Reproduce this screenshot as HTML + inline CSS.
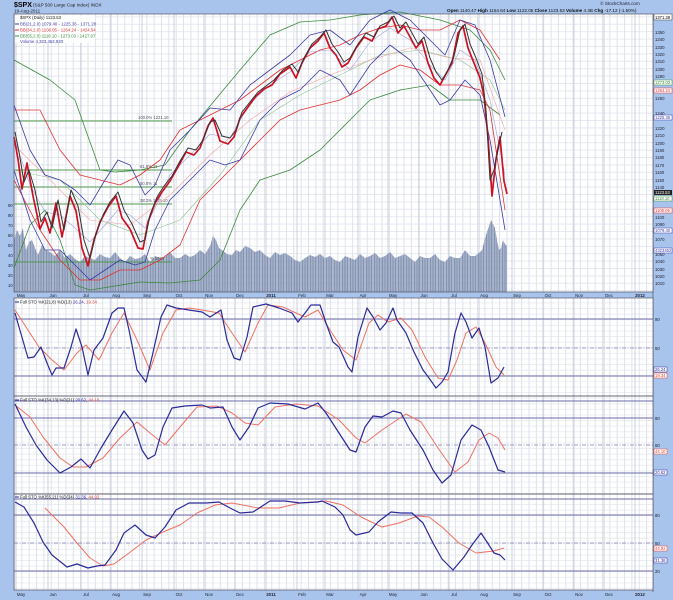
<!DOCTYPE html>
<html><head><meta charset="utf-8"><style>
html,body{margin:0;padding:0;background:#a8c4ec;}
svg{display:block;font-family:"Liberation Sans",sans-serif;}
</style></head><body>
<svg width="673" height="600" viewBox="0 0 673 600" xmlns="http://www.w3.org/2000/svg">
<defs>
<pattern id="vg" x="14" y="0" width="7.35" height="600" patternUnits="userSpaceOnUse"><line x1="0.5" y1="0" x2="0.5" y2="600" stroke="#dde2ec" stroke-width="1"/></pattern>
<pattern id="hg" x="0" y="1.6" width="673" height="7.4" patternUnits="userSpaceOnUse"><line x1="0" y1="0.5" x2="673" y2="0.5" stroke="#e6e9f0" stroke-width="1"/></pattern>
<pattern id="hg2" x="0" y="0" width="673" height="5.6" patternUnits="userSpaceOnUse"><line x1="0" y1="0.5" x2="673" y2="0.5" stroke="#eceef3" stroke-width="1"/></pattern>
<pattern id="vb" x="14" y="0" width="1.6" height="600" patternUnits="userSpaceOnUse"><rect x="0" y="0" width="1.3" height="600" fill="#8494b4"/></pattern>
</defs>
<rect width="673" height="600" fill="#a8c4ec"/>
<rect x="653" y="14" width="20" height="586" fill="#a8c4ec"/>
<line x1="653" y1="14" x2="653" y2="592" stroke="#556" stroke-width="0.7"/>
<text x="14" y="7" font-size="7" font-weight="bold" fill="#000">$SPX</text>
<text x="33" y="6.5" font-size="4.6" fill="#222">(S&amp;P 500 Large Cap Index) INDX</text>
<text x="14" y="12.5" font-size="4.6" fill="#222">19-Aug-2011</text>
<text x="620" y="5" font-size="4.6" fill="#223" text-anchor="middle">© StockCharts.com</text>
<text x="447" y="12" font-size="4.6" fill="#111"><tspan font-weight="bold">Open</tspan> 1140.47 <tspan font-weight="bold">High</tspan> 1154.64 <tspan font-weight="bold">Low</tspan> 1122.05 <tspan font-weight="bold">Close</tspan> 1123.53 <tspan font-weight="bold">Volume</tspan> 4.3B <tspan font-weight="bold">Chg</tspan> -17.12 (-1.50%)</text>

<rect x="14" y="14" width="639" height="278" fill="#fff"/>
<rect x="14" y="14" width="639" height="278" fill="url(#hg)"/>
<rect x="14" y="14" width="639" height="278" fill="url(#vg)"/>
<g stroke="#bfc5d3" stroke-width="0.8">
<line x1="16" y1="14" x2="16" y2="292"/><line x1="48" y1="14" x2="48" y2="292"/><line x1="81" y1="14" x2="81" y2="292"/><line x1="111" y1="14" x2="111" y2="292"/><line x1="142" y1="14" x2="142" y2="292"/><line x1="174" y1="14" x2="174" y2="292"/><line x1="204" y1="14" x2="204" y2="292"/><line x1="235" y1="14" x2="235" y2="292"/><line x1="266" y1="14" x2="266" y2="292"/><line x1="297" y1="14" x2="297" y2="292"/><line x1="325" y1="14" x2="325" y2="292"/><line x1="358" y1="14" x2="358" y2="292"/><line x1="388" y1="14" x2="388" y2="292"/><line x1="419" y1="14" x2="419" y2="292"/><line x1="449" y1="14" x2="449" y2="292"/><line x1="479" y1="14" x2="479" y2="292"/><line x1="512" y1="14" x2="512" y2="292"/><line x1="543" y1="14" x2="543" y2="292"/><line x1="574" y1="14" x2="574" y2="292"/><line x1="604" y1="14" x2="604" y2="292"/><line x1="635" y1="14" x2="635" y2="292"/>
</g>
<polygon fill="url(#vb)" points="14,292 14,240 17,230 20,236 23,228 26,250 29,242 32,240 35,248 38,255 42,245 45,250 50,252 55,256 60,250 65,258 70,254 75,259 80,262 85,256 90,258 95,260 100,254 105,257 110,258 115,252 120,258 125,262 130,256 135,259 140,258 145,254 150,262 155,256 160,258 165,257 170,252 175,258 180,258 185,254 190,257 195,255 200,250 205,254 210,246 213,236 216,240 219,248 222,250 227,254 232,255 236,250 240,252 245,246 250,248 255,252 260,250 265,255 270,258 275,252 280,255 285,253 290,256 295,260 300,262 305,258 310,255 315,257 320,254 325,258 330,256 335,260 340,262 345,256 350,258 355,260 360,254 365,258 370,256 375,253 380,258 385,256 390,252 395,258 400,256 405,254 410,258 415,262 420,256 425,258 430,258 435,254 440,260 445,262 450,256 455,258 460,258 465,250 470,256 475,256 480,252 482,250 485,238 487,232 489,226 491,220 493,224 495,228 497,240 499,250 501,248 503,240 505,244 507,246 507,292"/>
<g stroke="#4e9a4e" stroke-width="0.9">
<line x1="14" y1="121" x2="172" y2="121"/><line x1="14" y1="170" x2="172" y2="170"/><line x1="14" y1="187" x2="172" y2="187"/><line x1="14" y1="204" x2="172" y2="204"/><line x1="14" y1="262" x2="172" y2="262"/>
</g>
<g font-size="4.2" fill="#556">
<text x="138" y="119">100.0% 1221.10</text><text x="140" y="168">61.8% 11</text><text x="140" y="185">50.0% 11</text><text x="140" y="202">38.2% 1115.10</text><text x="150" y="260">% 1026</text>
</g>
<g fill="none" stroke-linejoin="round">
<polyline stroke="#3a8a3a" stroke-width="0.8" points="14,60 50,80 75,100 100,170 115,172 140,170 165,165 190,130 215,100 240,70 270,35 300,22 330,20 360,15 400,12 440,20 470,30 490,50 505,80"/>
<polyline stroke="#3a8a3a" stroke-width="0.8" points="14,268 30,225 45,210 60,240 75,285 90,290 140,282 170,283 200,280 220,260 240,210 260,180 290,170 320,150 350,120 370,100 400,90 430,85 450,100 480,100 500,115"/>
<polyline stroke="#8cc08c" stroke-width="0.6" points="14,170 60,180 100,220 140,235 180,220 220,175 260,120 300,95 340,75 380,55 420,50 460,60 490,80 505,110"/>
<polyline stroke="#e03030" stroke-width="0.8" points="14,110 40,110 60,150 80,175 100,180 120,185 140,175 160,160 180,130 200,120 220,110 240,100 260,85 280,70 300,60 320,50 340,45 360,35 380,28 400,25 420,30 440,30 460,20 480,30 500,60"/>
<polyline stroke="#e03030" stroke-width="0.8" points="14,180 40,230 60,260 80,280 100,280 120,270 140,270 160,260 180,245 200,200 220,180 240,160 260,140 280,120 300,110 320,105 340,100 360,90 380,75 400,65 420,70 440,85 460,85 480,90 490,110 505,210"/>
<polyline stroke="#f0a0a0" stroke-width="0.6" points="14,145 50,180 90,220 130,225 170,195 210,155 250,120 290,92 330,75 370,60 410,48 450,58 480,60 505,130"/>
<polyline stroke="#3a3aa8" stroke-width="0.8" points="14,105 30,150 45,175 60,180 75,190 90,205 105,180 118,160 130,165 145,195 155,185 170,150 190,130 210,108 230,110 250,85 270,70 290,55 310,35 330,30 350,45 370,20 390,10 410,20 430,40 445,55 460,20 475,25 490,60 505,117"/>
<polyline stroke="#3a3aa8" stroke-width="0.8" points="14,170 30,220 45,250 60,250 75,265 90,280 105,270 120,260 135,265 145,262 155,230 170,200 190,180 210,160 225,165 240,160 260,120 280,100 300,90 320,70 340,80 350,95 370,65 390,45 410,60 430,90 440,105 450,100 465,80 480,95 490,140 505,230"/>
<polyline stroke="#a0a0d8" stroke-width="0.6" points="14,138 30,185 45,212 60,215 75,228 90,242 105,225 118,210 130,215 145,228 155,208 170,175 190,155 210,134 230,138 250,103 270,85 290,72 310,52 330,50 350,70 370,42 390,28 410,40 430,65 445,80 460,50 475,60 490,100 505,175"/>
</g>
<polyline fill="none" stroke="#cc1122" stroke-width="1.7" stroke-linejoin="round" points="14,137 18,159 22,189 27,163 33,196 40,229 45,218 50,233 56,203 62,237 70,196 76,211 82,248 88,266 94,240 100,222 108,207 116,196 122,218 130,229 138,248 143,249 148,222 155,203 162,192 170,181 178,167 186,152 194,155 200,148 208,126 213,118 220,141 228,144 234,137 240,118 248,107 256,96 264,89 272,85 280,74 290,67 296,78 302,63 310,48 318,41 324,33 330,48 336,55 342,67 348,63 356,48 364,37 372,41 378,29 386,26 392,17 398,33 404,26 410,37 416,48 422,41 428,63 434,78 440,85 446,74 452,63 458,33 463,26 468,48 474,63 480,78 484,96 488,137 492,196 496,159 500,137 504,181 507,194"/>
<polyline fill="none" stroke="#333" stroke-width="1" stroke-linejoin="round" points="15,132 19,152 24,182 29,170 35,190 41,222 47,212 52,228 58,200 64,230 71,190 78,206 84,240 90,258 96,234 103,215 110,202 118,192 124,210 132,224 140,242 145,240 150,215 157,197 164,186 172,176 180,161 188,148 196,150 203,140 210,122 215,120 222,136 230,138 236,130 242,112 250,102 258,92 266,86 274,80 283,70 292,64 298,72 304,58 312,44 320,37 326,30 332,44 338,52 344,62 350,58 358,44 366,33 374,37 380,26 388,22 394,16 400,28 406,22 412,33 418,44 424,37 430,58 436,72 442,80 448,70 454,56 460,30 465,24 470,44 476,58 482,74 486,110 490,180 494,170 498,150 502,132"/>
<g font-size="4.3" fill="#222">
<rect x="15" y="15" width="80" height="28" fill="#fff" opacity="0.85"/>
<text x="20" y="19">$SPX (Daily) 1123.53</text>
<line x1="15" y1="24" x2="19" y2="24" stroke="#3a3aa8"/><text x="20" y="25.5" fill="#3a3aa8">BB(21,2.0) 1079.40 - 1225.36 - 1371.28</text>
<line x1="15" y1="30" x2="19" y2="30" stroke="#e03030"/><text x="20" y="31.5" fill="#e03030">BB(34,2.0) 1106.05 - 1264.24 - 1424.54</text>
<line x1="15" y1="36" x2="19" y2="36" stroke="#3a8a3a"/><text x="20" y="37.5" fill="#3a8a3a">BB(55,2.0) 1118.10 - 1273.03 - 1427.97</text>
<text x="20" y="43" fill="#3a3aa8">Volume 4,323,462,920</text>
</g>
<g font-size="4.3" fill="#223">
<text x="655" y="19">1370</text><text x="655" y="34">1350</text><text x="655" y="41">1340</text><text x="655" y="49">1330</text><text x="655" y="56">1320</text><text x="655" y="63">1310</text><text x="655" y="71">1300</text><text x="655" y="78">1290</text><text x="655" y="100">1260</text><text x="655" y="115">1240</text><text x="655" y="130">1220</text><text x="655" y="137">1210</text><text x="655" y="145">1200</text><text x="655" y="152">1190</text><text x="655" y="159">1180</text><text x="655" y="167">1170</text><text x="655" y="174">1160</text><text x="655" y="182">1150</text><text x="655" y="189">1140</text><text x="655" y="219">1100</text><text x="655" y="226">1090</text><text x="655" y="241">1070</text><text x="655" y="256">1050</text><text x="655" y="263">1040</text><text x="655" y="271">1030</text><text x="655" y="278">1020</text><text x="655" y="285">1010</text>
</g>
<g font-size="4.2">
<rect x="654" y="14" width="18" height="6" fill="#fff" stroke="#444" stroke-width="0.5"/><text x="655" y="19" fill="#000">1371.28</text>
<rect x="654" y="80" width="18" height="5" fill="#fff" stroke="#3a8a3a" stroke-width="0.5"/><text x="655" y="84" fill="#3a8a3a">1273.03</text>
<rect x="654" y="88" width="18" height="5" fill="#fff" stroke="#e03030" stroke-width="0.5"/><text x="655" y="92" fill="#e03030">1264.24</text>
<rect x="654" y="115" width="18" height="5" fill="#fff" stroke="#3a3aa8" stroke-width="0.5"/><text x="655" y="119" fill="#3a3aa8">1225.36</text>
<rect x="654" y="190" width="18" height="5" fill="#222"/><text x="655" y="194" fill="#fff">1123.53</text>
<rect x="654" y="196" width="18" height="5" fill="#fff" stroke="#3a8a3a" stroke-width="0.5"/><text x="655" y="200" fill="#3a8a3a">1118.10</text>
<rect x="654" y="208" width="18" height="5" fill="#fff" stroke="#e03030" stroke-width="0.5"/><text x="655" y="212" fill="#e03030">1106.05</text>
<rect x="654" y="228" width="18" height="5" fill="#fff" stroke="#3a3aa8" stroke-width="0.5"/><text x="655" y="232" fill="#3a3aa8">1079.40</text>
<rect x="654" y="248" width="18" height="5" fill="#fff" stroke="#3a3aa8" stroke-width="0.5"/><text x="655" y="252" fill="#3a3aa8">4323462</text>
</g>
<g font-size="4.2" fill="#223">
<text x="8" y="207">90</text><text x="8" y="217">80</text><text x="8" y="227">70</text><text x="8" y="237">60</text><text x="8" y="247">50</text><text x="8" y="257">40</text><text x="8" y="267">30</text><text x="8" y="277">20</text><text x="8" y="287">10</text>
</g>
<rect x="14" y="14" width="639" height="278" fill="none" stroke="#556" stroke-width="0.7"/>
<g font-size="4.4" fill="#223" text-anchor="middle">
<text x="21" y="297">May</text><text x="53" y="297">Jun</text><text x="86" y="297">Jul</text><text x="116" y="297">Aug</text><text x="147" y="297">Sep</text><text x="179" y="297">Oct</text><text x="209" y="297">Nov</text><text x="240" y="297">Dec</text><text x="271" y="297" font-weight="bold">2011</text><text x="302" y="297">Feb</text><text x="330" y="297">Mar</text><text x="363" y="297">Apr</text><text x="393" y="297">May</text><text x="424" y="297">Jun</text><text x="454" y="297">Jul</text><text x="484" y="297">Aug</text><text x="517" y="297">Sep</text><text x="548" y="297">Oct</text><text x="579" y="297">Nov</text><text x="609" y="297">Dec</text><text x="640" y="297" font-weight="bold">2012</text>
</g>

<g>
<rect x="14" y="298" width="639" height="98" fill="#fff"/>
<rect x="14" y="396" width="639" height="98" fill="#fff"/>
<rect x="14" y="494" width="639" height="96" fill="#fff"/>
<rect x="14" y="298" width="639" height="292" fill="url(#hg2)"/>
<rect x="14" y="298" width="639" height="292" fill="url(#vg)"/>
</g>
<g stroke="#bfc5d3" stroke-width="0.8">
<line x1="16" y1="298" x2="16" y2="590"/><line x1="48" y1="298" x2="48" y2="590"/><line x1="81" y1="298" x2="81" y2="590"/><line x1="111" y1="298" x2="111" y2="590"/><line x1="142" y1="298" x2="142" y2="590"/><line x1="174" y1="298" x2="174" y2="590"/><line x1="204" y1="298" x2="204" y2="590"/><line x1="235" y1="298" x2="235" y2="590"/><line x1="266" y1="298" x2="266" y2="590"/><line x1="297" y1="298" x2="297" y2="590"/><line x1="325" y1="298" x2="325" y2="590"/><line x1="358" y1="298" x2="358" y2="590"/><line x1="388" y1="298" x2="388" y2="590"/><line x1="419" y1="298" x2="419" y2="590"/><line x1="449" y1="298" x2="449" y2="590"/><line x1="479" y1="298" x2="479" y2="590"/><line x1="512" y1="298" x2="512" y2="590"/><line x1="543" y1="298" x2="543" y2="590"/><line x1="574" y1="298" x2="574" y2="590"/><line x1="604" y1="298" x2="604" y2="590"/><line x1="635" y1="298" x2="635" y2="590"/>
</g>
<g stroke="#6a6aa8" stroke-width="1">
<line x1="14" y1="319" x2="653" y2="319"/><line x1="14" y1="376" x2="653" y2="376"/>
<line x1="14" y1="418" x2="653" y2="418"/><line x1="14" y1="473" x2="653" y2="473"/>
<line x1="14" y1="515" x2="653" y2="515"/><line x1="14" y1="571" x2="653" y2="571"/>
<line x1="14" y1="401" x2="653" y2="401"/><line x1="14" y1="499" x2="653" y2="499"/>
</g>
<g stroke="#8080b8" stroke-width="0.8" stroke-dasharray="4 1.5 1 1.5">
<line x1="14" y1="348" x2="653" y2="348"/><line x1="14" y1="445" x2="653" y2="445"/><line x1="14" y1="543" x2="653" y2="543"/>
</g>
<g fill="none" stroke-linejoin="round">
<polyline stroke="#f07060" stroke-width="1" points="15,310 26,327 39,347 52,360 64,370 77,353 86,345 99,360 112,333 124,313 137,340 150,370 163,333 176,310 189,308 202,310 219,313 232,333 245,352 258,323 268,305 283,307 296,313 305,317 318,310 330,330 343,350 356,360 369,323 378,315 388,322 401,318 412,330 425,357 438,378 448,380 457,360 466,333 476,327 485,343 496,367 504,375"/>
<polyline stroke="#2a2a9a" stroke-width="1.2" points="15,313 19,327 28,358 34,357 41,347 47,363 52,375 56,368 64,368 71,347 76,329 82,347 88,375 94,350 103,338 112,313 118,308 124,308 129,330 137,370 146,382 152,357 161,317 167,305 176,308 189,310 202,312 210,317 221,310 227,340 234,358 240,360 247,337 253,307 266,304 279,308 292,313 298,322 305,313 311,305 320,305 326,323 333,342 339,347 348,367 352,372 358,337 367,308 373,317 380,330 386,323 393,308 397,320 406,333 414,352 423,370 429,378 436,388 442,382 448,372 455,333 461,313 466,322 472,338 479,328 485,347 491,383 498,378 504,367"/>
</g>
<g fill="none" stroke-linejoin="round">
<polyline stroke="#f07060" stroke-width="1" points="15,405 30,417 43,437 60,458 73,467 86,467 103,458 120,438 137,422 150,433 165,445 180,427 197,407 217,406 232,413 245,423 258,425 275,407 296,404 318,406 339,420 356,438 365,443 382,430 406,414 421,422 438,448 455,472 468,462 479,440 489,433 498,438 505,450"/>
<polyline stroke="#2a2a9a" stroke-width="1.2" points="15,404 26,427 36,445 47,460 60,473 71,467 81,459 90,468 101,448 112,430 124,411 133,423 142,450 148,459 155,455 163,427 172,408 185,406 202,405 210,408 223,407 232,427 240,440 249,427 258,408 270,403 288,404 305,409 318,403 326,413 339,433 350,450 356,452 365,427 373,416 382,417 393,411 401,413 410,430 423,450 433,470 442,483 451,475 461,440 472,425 481,430 489,447 498,470 505,472"/>
</g>
<g fill="none" stroke-linejoin="round">
<polyline stroke="#f07060" stroke-width="1" points="45,508 64,527 77,543 90,558 103,566 114,564 129,553 146,540 163,532 180,525 197,513 215,505 232,503 258,508 279,508 300,503 326,501 343,505 361,517 382,527 399,523 418,516 429,517 442,527 459,543 476,553 494,551 504,548"/>
<polyline stroke="#2a2a9a" stroke-width="1.2" points="15,502 24,507 34,523 43,542 52,555 67,567 77,564 88,568 97,566 105,565 116,550 124,533 135,525 146,535 155,538 165,527 176,510 189,503 206,503 219,502 230,508 240,513 253,512 270,501 285,501 300,503 318,502 322,501 335,507 343,515 350,530 356,535 369,532 378,522 391,512 401,513 412,513 423,523 433,543 442,559 453,570 464,557 472,545 481,533 487,542 494,553 500,555 505,560"/>
</g>
<g fill="none" stroke="#556" stroke-width="0.7">
<rect x="14" y="298" width="639" height="98"/>
<rect x="14" y="396" width="639" height="98"/>
<rect x="14" y="494" width="639" height="96"/>
</g>
<g font-size="4.3" fill="#222">
<line x1="15" y1="302" x2="19" y2="302" stroke="#2a2a9a"/><text x="20" y="303.5">Full STO %K(21,8) %D(13) <tspan fill="#2a2a9a">26.24</tspan>, <tspan fill="#e04030">19.34</tspan></text>
<line x1="15" y1="400" x2="19" y2="400" stroke="#2a2a9a"/><text x="20" y="401.5">Full STO %K(34,13) %D(21) <tspan fill="#2a2a9a">20.62</tspan>, <tspan fill="#e04030">44.10</tspan></text>
<line x1="15" y1="497" x2="19" y2="497" stroke="#2a2a9a"/><text x="20" y="498.5">Full STO %K(55,21) %D(34) <tspan fill="#2a2a9a">31.36</tspan>, <tspan fill="#e04030">44.92</tspan></text>
</g>
<g font-size="4.3" fill="#223">
<text x="655" y="321">80</text><text x="655" y="350">50</text><text x="655" y="378">20</text>
<text x="655" y="420">80</text><text x="655" y="447">50</text><text x="655" y="475">20</text>
<text x="655" y="517">80</text><text x="655" y="545">50</text><text x="655" y="573">20</text>
</g>
<g font-size="4.2">
<rect x="654" y="367" width="13" height="5" fill="#fff" stroke="#2a2a9a" stroke-width="0.5"/><text x="655" y="371" fill="#2a2a9a">26.24</text>
<rect x="654" y="373" width="13" height="5" fill="#fff" stroke="#e04030" stroke-width="0.5"/><text x="655" y="377" fill="#e04030">19.34</text>
<rect x="654" y="449" width="13" height="5" fill="#fff" stroke="#e04030" stroke-width="0.5"/><text x="655" y="453" fill="#e04030">44.10</text>
<rect x="654" y="470" width="13" height="5" fill="#fff" stroke="#2a2a9a" stroke-width="0.5"/><text x="655" y="474" fill="#2a2a9a">20.62</text>
<rect x="654" y="546" width="13" height="5" fill="#fff" stroke="#e04030" stroke-width="0.5"/><text x="655" y="550" fill="#e04030">44.92</text>
<rect x="654" y="558" width="13" height="5" fill="#fff" stroke="#2a2a9a" stroke-width="0.5"/><text x="655" y="562" fill="#2a2a9a">31.36</text>
</g>
<g font-size="4.4" fill="#223" text-anchor="middle">
<text x="21" y="596">May</text><text x="53" y="596">Jun</text><text x="86" y="596">Jul</text><text x="116" y="596">Aug</text><text x="147" y="596">Sep</text><text x="179" y="596">Oct</text><text x="209" y="596">Nov</text><text x="240" y="596">Dec</text><text x="271" y="596" font-weight="bold">2011</text><text x="302" y="596">Feb</text><text x="330" y="596">Mar</text><text x="363" y="596">Apr</text><text x="393" y="596">May</text><text x="424" y="596">Jun</text><text x="454" y="596">Jul</text><text x="484" y="596">Aug</text><text x="517" y="596">Sep</text><text x="548" y="596">Oct</text><text x="579" y="596">Nov</text><text x="609" y="596">Dec</text><text x="640" y="596" font-weight="bold">2012</text>
</g>
</svg>
</body></html>
